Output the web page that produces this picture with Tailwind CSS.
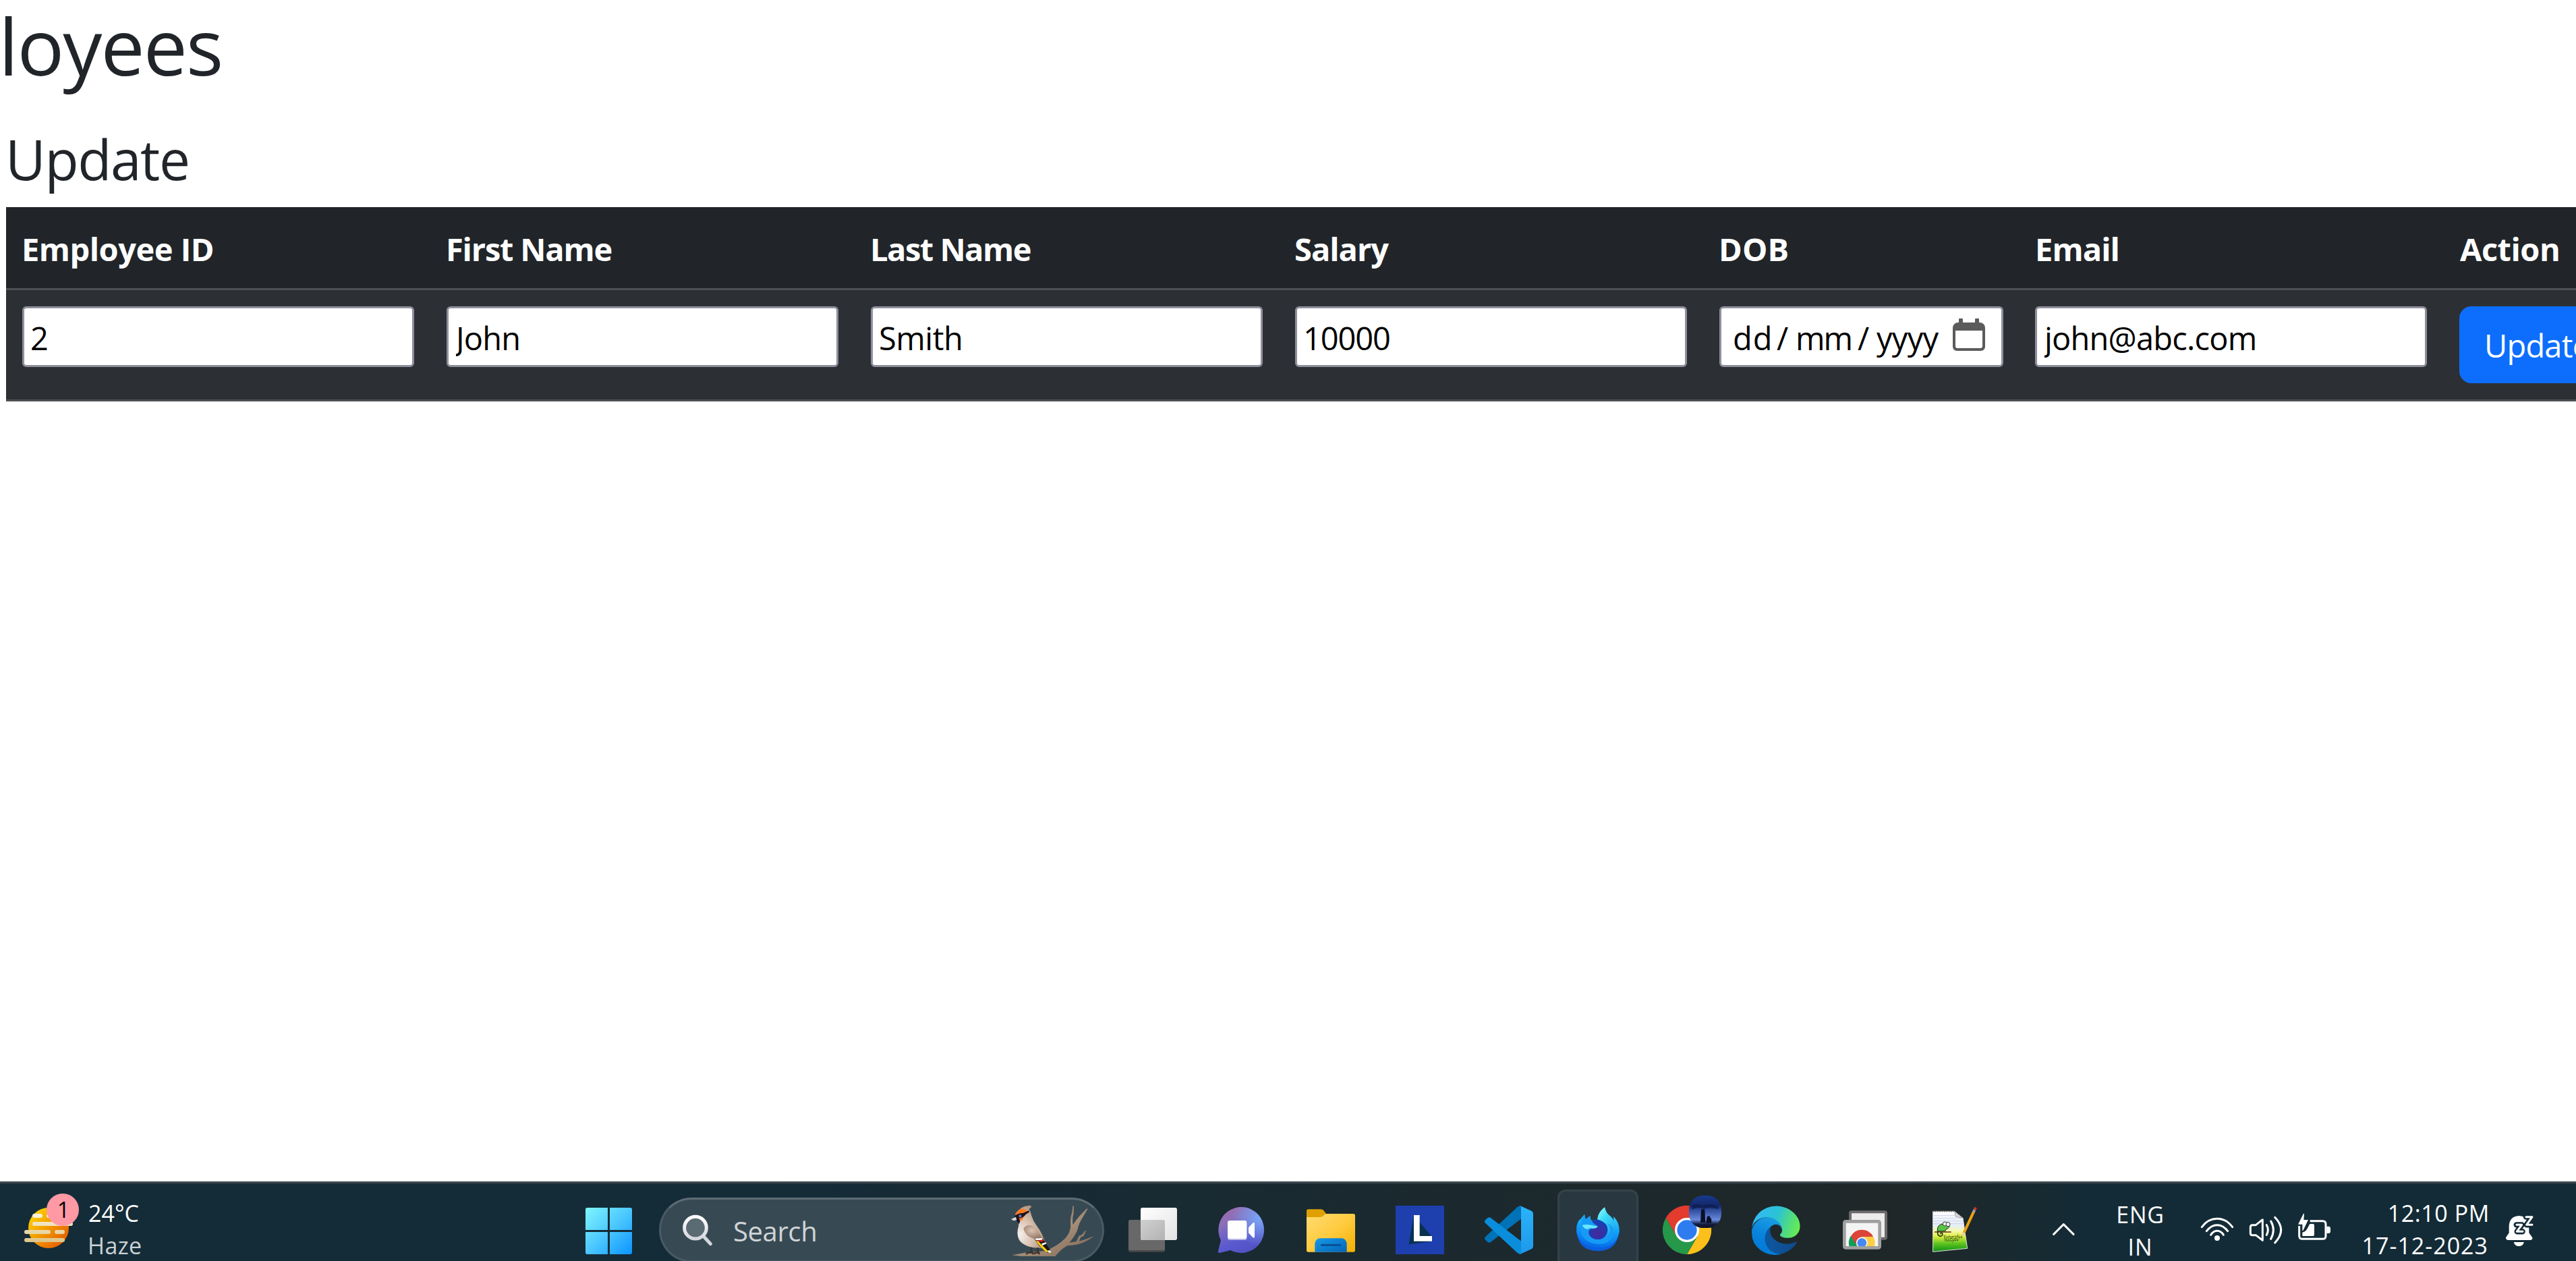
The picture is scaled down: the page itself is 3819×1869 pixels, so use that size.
<!DOCTYPE html>
<html lang="en">
<head>
<meta charset="utf-8">
<title>Employees</title>
<script src="https://cdn.jsdelivr.net/npm/@tailwindcss/browser@4"></script>
</head>
<body class="w-[3819px] h-[1869px] overflow-hidden bg-white font-['Open_Sans','Noto_Sans',sans-serif] text-[#212529] flex flex-col">

<main class="h-[1751px] shrink-0 overflow-hidden">
  <h1 class="-ml-0.5 h-[134px] text-[116px] leading-[134px] tracking-[-1.9px]">loyees</h1>
  <h3 class="mt-[51px] ml-2 h-[100px] text-[82px] leading-[100px] tracking-[-1.4px]">Update</h3>

  <div class="mt-[22px] ml-[9px] w-[3960px] text-[47px]">
    <div class="flex h-[123px] items-center border-b-3 border-[#4d5154] bg-[#212529] pt-1 font-bold text-white">
      <div class="w-[629px] shrink-0 pl-[23px] tracking-[-0.5px]">Employee ID</div>
      <div class="w-[629px] shrink-0 pl-[23px] tracking-[-1.2px]">First Name</div>
      <div class="w-[629px] shrink-0 pl-[23px] tracking-[-1.5px]">Last Name</div>
      <div class="w-[629px] shrink-0 pl-[23px] tracking-[-1px]">Salary</div>
      <div class="w-[469px] shrink-0 pl-[23px] tracking-[0.2px]">DOB</div>
      <div class="w-[629px] shrink-0 pl-[23px] tracking-[-0.9px]">Email</div>
      <div class="shrink-0 pl-[24px] tracking-[-0.5px]">Action</div>
    </div>
    <div class="flex h-[165px] gap-12 border-b-3 border-[#4d5154] bg-[#2c3034] pt-6 pl-6 text-black">
      <input class="h-[90px] w-[581px] shrink-0 rounded-[6px] border-3 border-[#8f8f9d] bg-white pt-1 pl-[9px]" value="2">
      <input class="h-[90px] w-[581px] shrink-0 rounded-[6px] border-3 border-[#8f8f9d] bg-white pt-1 pl-[11px] tracking-[-0.8px]" value="John">
      <input class="h-[90px] w-[581px] shrink-0 rounded-[6px] border-3 border-[#8f8f9d] bg-white pt-1 pl-[9px] tracking-[-0.5px]" value="Smith">
      <input class="h-[90px] w-[581px] shrink-0 rounded-[6px] border-3 border-[#8f8f9d] bg-white pt-1 pl-[9px] tracking-[-1.1px]" value="10000">
      <div class="flex h-[90px] w-[421px] shrink-0 items-center rounded-[6px] border-3 border-[#8f8f9d] bg-white pl-[17px] -mr-px">
        <span class="w-[65px] pt-1 tracking-[1px]">dd</span>
        <span class="w-[28px] pt-1">/</span>
        <span class="w-[92px] pt-1 tracking-[-2px]">mm</span>
        <span class="w-[28px] pt-1">/</span>
        <span class="w-[113px] pt-1 tracking-[-0.7px]">yyyy</span>
        <svg class="mb-1.5 h-12 w-12" viewBox="0 0 48 48"><path fill="#5b5b5b" fill-rule="evenodd" d="M9 2a2 2 0 0 1 6 0V6H33V2a2 2 0 0 1 6 0V6H40a8 8 0 0 1 8 8V42a6 6 0 0 1-6 6H6a6 6 0 0 1-6-6V14A8 8 0 0 1 8 6H9ZM4 18V41a3 3 0 0 0 3 3H41a3 3 0 0 0 3-3V18Z"/></svg>
      </div>
      <input class="h-[90px] w-[581px] shrink-0 rounded-[6px] border-3 border-[#8f8f9d] bg-white pt-1 pl-[11px] tracking-[-0.8px]" value="john@abc.com">
      <button class="h-[114px] w-[240px] shrink-0 rounded-[18px] bg-[#0d6efd] pt-0.5 pl-[37px] text-left tracking-[-0.8px] text-white">Update</button>
    </div>
  </div>
</main>

<footer class="flex h-[118px] shrink-0 overflow-hidden border-t-3 border-[#3e4a50] bg-linear-to-r from-[#142c38] from-30% via-[#1f2728] via-74% to-[#132b36] to-81% text-[34px] leading-[48px] text-white">
  <!-- Weather -->
  <svg class="ml-[30px] h-[115px] w-[90px] shrink-0" viewBox="90 72 270 345">
    <defs><linearGradient id="sun" x1="0" y1="0" x2="1" y2="1"><stop offset=".1" stop-color="#ffd400"/><stop offset="1" stop-color="#e04a00"/></linearGradient>
    <linearGradient id="fog" x1="0" y1="207" x2="0" y2="333" gradientUnits="userSpaceOnUse"><stop offset="0" stop-color="#fbf6e0"/><stop offset="1" stop-color="#dcc488"/></linearGradient></defs>
    <circle cx="216" cy="270" r="90" fill="url(#sun)"/>
    <g fill="url(#fog)"><path d="M153 207H180a9 9 0 0 1 0 18H153a9 9 0 0 1 0-18ZM216 207H260V225H216a9 9 0 0 1 0-18ZM153 243H315a9 9 0 0 1 0 18H153a9 9 0 0 1 0-18ZM117 279H216a9 9 0 0 1 0 18H117a9 9 0 0 1 0-18ZM252 279H279a9 9 0 0 1 0 18H252a9 9 0 0 1 0-18ZM117 315H279a9 9 0 0 1 0 18H117a9 9 0 0 1 0-18Z"/></g>
    <circle cx="279" cy="189" r="72" fill="#ff99a4"/>
    <text x="254" y="225" font-size="97" fill="#000" font-family="Open Sans">1</text>
  </svg>
  <div class="ml-[11px] mt-5 w-[200px] shrink-0">
    <div>24°C</div>
    <div class="text-[#cbd1d4] -ml-px tracking-[0.4px]">Haze</div>
  </div>

  <!-- Start -->
  <svg class="ml-[537px] h-[115px] w-[69px] shrink-0" viewBox="144 72 207 345">
    <defs><linearGradient id="win" gradientUnits="userSpaceOnUse" x1="144" y1="180" x2="351" y2="387"><stop offset="0" stop-color="#7ef6fd"/><stop offset=".5" stop-color="#4cc8ff"/><stop offset="1" stop-color="#0a94ff"/></linearGradient></defs>
    <path fill="url(#win)" d="M152 180H243V279H144V188a8 8 0 0 1 8-8ZM252 180H343a8 8 0 0 1 8 8V279H252ZM144 288H243V387H152a8 8 0 0 1-8-8ZM252 288H351V379a8 8 0 0 1-8 8H252Z"/>
  </svg>

  <!-- Search -->
  <div class="ml-10 mt-[21px] flex h-[96px] w-[660px] shrink-0 rounded-full border-3 border-[#495a63] border-t-[#5e6d74] bg-[#374a54]">
    <svg class="ml-[30px] h-[90px] w-[50px] shrink-0" viewBox="570 144 150 270">
      <defs><linearGradient id="mag" x1="0" y1="0" x2="0" y2="1"><stop offset="0" stop-color="#fff"/><stop offset="1" stop-color="#d5d7de"/></linearGradient></defs>
      <path d="M668 306L700 341" stroke="#d5d7de" stroke-width="15" stroke-linecap="round"/>
      <circle cx="633" cy="269" r="49" fill="#5b6b73" stroke="url(#mag)" stroke-width="15"/>
    </svg>
    <div class="ml-[27px] w-[412px] shrink-0 pt-[2px] text-[40px] leading-[90px] tracking-[-0.4px] text-[#d0d4d7]">Search</div>
    <svg class="h-[90px] w-[127px] shrink-0" viewBox="537 144 381 270">
      <defs>
        <linearGradient id="branch" x1="0" y1="0" x2="1" y2="1"><stop offset="0" stop-color="#7d6450"/><stop offset=".55" stop-color="#a58e78"/><stop offset="1" stop-color="#7c6250"/></linearGradient>
        <radialGradient id="body" cx=".15" cy=".68" r=".8"><stop offset="0" stop-color="#f3efec"/><stop offset=".45" stop-color="#dcc4b4"/><stop offset="1" stop-color="#a98a76"/></radialGradient>
        <radialGradient id="wing" cx=".4" cy=".35" r=".7"><stop offset="0" stop-color="#dcc3b0"/><stop offset="1" stop-color="#86695a"/></radialGradient>
      </defs>
      <path fill="url(#branch)" d="M541 391L600 380L690 372Q745 350 778 316Q800 292 802 262Q798 225 808 200L811 172L816 173L815 205Q808 230 812 256Q824 236 844 214L874 183L877 186L856 222Q838 248 832 280Q818 312 796 335L826 331Q834 318 838 306L852 300L868 281L870 283L860 305L846 313L840 329Q872 320 907 306Q880 326 855 336Q825 348 790 348Q765 358 733 396L580 395Z"/>
      <path fill="url(#body)" d="M556 208Q580 170 622 170L628 176L616 187Q624 196 627 214Q635 240 652 262Q676 292 690 340L700 360L640 358Q596 352 576 328Q558 300 570 262L572 240Q560 230 556 208Z"/>
      <path fill="#ff7a1f" d="M556 208Q566 188 588 184L608 192L596 214L586 236L570 238Z"/>
      <path fill="#1c1420" d="M553 216Q574 202 590 204L615 193L619 199L602 210Q590 228 572 226L577 240L573 252L560 236Z"/>
      <circle cx="577" cy="217" r="7" fill="#7e7bb0" stroke="#262040" stroke-width="3"/>
      <path fill="#d5d8dc" d="M537 231L558 221L562 235L548 238Z"/>
      <path fill="url(#wing)" d="M592 272Q606 252 630 260Q652 276 672 312L684 324L640 318Q600 308 592 272Z"/>
      <path fill="#1a1614" d="M640 317L678 318L715 374L700 380L662 350Z"/>
      <path fill="#fff" d="M642 317L674 315L678 323L648 325ZM672 340L692 334L694 340L676 348ZM700 370L712 370L715 379L704 380Z"/>
      <path fill="#e01b24" d="M654 326L680 322L680 330L660 332Z"/>
      <path fill="#f7ce0e" d="M648 328L656 328L704 376L696 378Q668 360 648 328Z"/>
      <path stroke="#3c2f2b" stroke-width="7" fill="none" d="M627 356V380M656 358V380M603 386L612 380H634V388M640 386L646 380H661V388"/>
    </svg>
  </div>

  <!-- Task view -->
  <svg class="ml-9 h-[115px] w-[72px] shrink-0" viewBox="1059 72 216 345">
    <defs><linearGradient id="tv" x1="0" y1="0" x2="1" y2="1"><stop offset="0" stop-color="#fff"/><stop offset="1" stop-color="#e2e2e2"/></linearGradient>
    <linearGradient id="tv2" x1="0" y1="0" x2="1" y2="1"><stop offset="0" stop-color="#d0d0d0"/><stop offset="1" stop-color="#b3b3b3"/></linearGradient></defs>
    <rect x="1059" y="234" width="162" height="144" rx="8" fill="#444"/>
    <rect x="1059" y="234" width="162" height="136" rx="8" fill="#686868"/>
    <rect x="1113" y="180" width="162" height="144" rx="8" fill="url(#tv)"/>
    <path d="M1113 234H1213a8 8 0 0 1 8 8V324H1121a8 8 0 0 1-8-8Z" fill="url(#tv2)"/>
  </svg>

  <!-- Chat -->
  <svg class="ml-[61px] h-[115px] w-[68px] shrink-0" viewBox="78 72 204 345">
    <defs><linearGradient id="chat" x1=".1" y1="0" x2=".6" y2="1"><stop offset="0" stop-color="#a569a6"/><stop offset=".3" stop-color="#8a6fba"/><stop offset=".7" stop-color="#5b5bd0"/><stop offset="1" stop-color="#5450c4"/></linearGradient>
    <radialGradient id="chat2" cx=".9" cy=".25" r=".6"><stop offset="0" stop-color="#7aa6f5"/><stop offset="1" stop-color="#7aa6f5" stop-opacity="0"/></radialGradient></defs>
    <path id="bub" fill="url(#chat)" d="M180 177a102 102 0 1 1-48 192L86 381Q76 382 78 372L90 325A102 102 0 0 1 180 177Z"/>
    <path fill="url(#chat2)" d="M180 177a102 102 0 1 1-48 192L86 381Q76 382 78 372L90 325A102 102 0 0 1 180 177Z"/>
    <rect x="120" y="243" width="85" height="81" rx="9" fill="#b9b6ea"/>
    <rect x="120" y="237" width="85" height="81" rx="9" fill="#fff"/>
    <path fill="#fff" d="M213 268L232 248Q240 242 240 252V308Q240 318 232 312L213 292Z"/>
  </svg>

  <!-- Files -->
  <svg class="ml-[63px] h-[115px] w-[72px] shrink-0" viewBox="471 72 216 345">
    <defs><linearGradient id="fol" x1="0" y1="0" x2="1" y2="1"><stop offset="0" stop-color="#ffdc73"/><stop offset=".5" stop-color="#ffcb40"/><stop offset="1" stop-color="#f5b000"/></linearGradient>
    <linearGradient id="pock" x1="0" y1="0" x2="1" y2="1"><stop offset="0" stop-color="#179ae6"/><stop offset="1" stop-color="#0363b8"/></linearGradient></defs>
    <path fill="#e0a000" d="M471 195a8 8 0 0 1 8-8H535Q542 187 547 192L562 212V240H471Z"/>
    <path fill="url(#fol)" d="M471 222H530Q540 222 546 216L552 210Q556 207 562 207H679a8 8 0 0 1 8 8V369a8 8 0 0 1-8 8H479a8 8 0 0 1-8-8Z"/>
    <path fill="url(#pock)" d="M508 377V340a24 24 0 0 1 24-24H626a24 24 0 0 1 24 24V377Z"/>
    <path d="M538 346H620" stroke="#0b4c92" stroke-width="8" stroke-linecap="round"/>
  </svg>

  <!-- L -->
  <svg class="ml-[60px] h-[115px] w-[72px] shrink-0" viewBox="867 72 216 345">
    <path fill="#1e3fae" d="M867 171H1083V387H867Z"/>
    <path fill="#07314f" d="M948 213L926 343L1029 329V310Z"/>
    <path fill="#fff" d="M948 213H974V306H1029V329H948Z"/>
  </svg>

  <!-- Code -->
  <svg class="ml-[60px] h-[115px] w-[72px] shrink-0" viewBox="1263 72 216 345">
    <defs><linearGradient id="vs" x1="0" y1="0" x2="0" y2="1"><stop offset="0" stop-color="#2ab4f8"/><stop offset="1" stop-color="#1f98ec"/></linearGradient></defs>
    <path fill="#0072b8" d="M1420 171L1426 173V229L1289 334Q1283 337 1277 333L1266 323Q1260 317 1266 310L1408 178Z"/>
    <path fill="#0a8ddb" d="M1420 387L1426 385V329L1289 224Q1283 221 1277 225L1266 235Q1260 241 1266 248L1408 380Z"/>
    <path fill="url(#vs)" d="M1420 171L1471 194Q1479 198 1479 206V352Q1479 360 1471 364L1420 387Q1425 385 1425 378V180Q1425 173 1420 171Z"/>
  </svg>

  <!-- Firefox Developer Edition -->
  <div class="ml-9 mt-[9px] h-[120px] w-[120px] shrink-0 rounded-[12px] border-3 border-[#354349] bg-[#283740]">
    <svg class="ml-[25px] h-[103px] w-[64px]" viewBox="231 108 192 309">
      <defs><linearGradient id="fx" x1=".6" y1="0" x2=".4" y2="1"><stop offset="0" stop-color="#4be4fd"/><stop offset=".5" stop-color="#12a4f9"/><stop offset="1" stop-color="#0668e8"/></linearGradient>
      <linearGradient id="flame" x1="0" y1="0" x2=".6" y2="1"><stop offset="0" stop-color="#a5fbff"/><stop offset=".4" stop-color="#3ddcf8"/><stop offset="1" stop-color="#1aa4ee"/></linearGradient>
      <radialGradient id="globe" cx=".5" cy=".7" r=".7"><stop offset="0" stop-color="#46279c"/><stop offset="1" stop-color="#0f44b8"/></radialGradient></defs>
      <path fill="#0a5fdc" d="M231 285Q240 373 327 373Q412 373 422 285Z"/>
      <path fill="url(#fx)" d="M267 209L272 232L292 217L296 236L330 236Q318 210 357 178Q360 204 380 216Q394 226 397 240V219Q425 250 422 288Q408 358 327 358Q250 356 232 288Q228 244 252 228Z"/>
      <circle cx="325" cy="277" r="45" fill="url(#globe)"/>
      <path fill="url(#flame)" d="M357 178Q362 204 382 218Q410 244 402 284Q392 320 346 320Q384 300 366 258Q352 240 324 232Q328 200 357 178Z"/>
      <path fill="#159bf5" d="M267 209L272 232L292 217L295 236Q306 250 326 262Q318 276 296 274Q284 280 286 294Q294 322 330 322Q372 318 382 282Q384 262 366 249Q400 262 398 296Q386 338 334 342Q268 340 252 292Q244 250 267 209Z"/>
      <path fill="#69e6ff" d="M257 257Q280 252 298 258L327 263Q318 274 300 271Q288 270 280 276Q262 272 257 257Z"/>
    </svg>
  </div>

  <!-- Chrome with profile picture -->
  <svg class="ml-9 h-[115px] w-[87px] shrink-0" viewBox="615 72 261 345">
    <defs><linearGradient id="sky" x1="0" y1="0" x2="0" y2="1"><stop offset="0" stop-color="#173a90"/><stop offset=".3" stop-color="#14286a"/><stop offset=".42" stop-color="#2a4796"/><stop offset=".75" stop-color="#6a8adf"/><stop offset=".88" stop-color="#141d3e"/><stop offset="1" stop-color="#0a1026"/></linearGradient></defs>
    <path fill="#e33b2e" d="M629 225A108 108 0 0 1 817 225H723L676 306Z"/>
    <path fill="#fdc01a" d="M817 225A108 108 0 0 1 723 387L770 306L723 225Z"/>
    <path fill="#26984a" d="M723 387A108 108 0 0 1 629 225L676 306H770Z"/>
    <circle cx="723" cy="279" r="49" fill="#2f7cf0" stroke="#fff" stroke-width="10"/>
    <rect x="732" y="126" width="144" height="144" rx="62" fill="url(#sky)"/>
    <path fill="#0a1128" d="M786 190Q794 182 802 190L805 246H783ZM812 220L822 216L832 232V248H808Z"/>
    <path fill="#0c1a48" opacity=".7" d="M742 172Q770 160 790 172Q820 158 866 176L862 186Q820 176 800 186Q770 174 746 188Z"/>
  </svg>

  <!-- Edge -->
  <svg class="ml-[45px] h-[115px] w-[72px] shrink-0" viewBox="0 -117.3 256 408.9">
    <defs><linearGradient id="e1" x1="0" y1="0" x2="1" y2="0"><stop offset="0" stop-color="#0c59a4"/><stop offset="1" stop-color="#114a8b"/></linearGradient>
    <linearGradient id="e2" x1=".6" y1="0" x2=".3" y2="1"><stop offset="0" stop-color="#1b9de2"/><stop offset=".5" stop-color="#0883dc"/><stop offset="1" stop-color="#0078d4"/></linearGradient>
    <linearGradient id="e3" x1="0" y1=".3" x2="1" y2=".55"><stop offset="0" stop-color="#35b8f8"/><stop offset=".5" stop-color="#2ac3d4"/><stop offset=".75" stop-color="#4bd88a"/><stop offset="1" stop-color="#66eb55"/></linearGradient></defs>
    <path fill="url(#e1)" d="M231.1 190.5a93 93 0 0 1-10.5 4.7 101.7 101.7 0 0 1-35.9 6.5c-47.3 0-88.5-32.5-88.5-74.3a31.5 31.5 0 0 1 16.4-27.3c-42.8 1.8-53.8 46.4-53.8 72.5 0 73.9 68.1 81.4 82.8 81.4 7.9 0 19.8-2.3 27-4.6l1.3-.4a128.3 128.3 0 0 0 66.6-52.8 4 4 0 0 0-5.4-5.7z"/>
    <path fill="url(#e2)" d="M105.7 241.4A79.2 79.2 0 0 1 83 220A80.7 80.7 0 0 1 112.5 102.4c3.1-1.5 8.5-4.1 15.5-4 10.1.1 19.6 4.9 25.7 13a37 37 0 0 1 6.4 18.7C160 129.8 184.6 61.6 80 61.6c-43.9 0-80 41.6-80 78.2a130 130 0 0 0 12.1 56 128 128 0 0 0 156.4 55.5 75.3 75.3 0 0 1-62.8-10z"/>
    <path fill="url(#e3)" d="M152.2 148.9c-.8 1-3.3 2.5-3.3 5.6 0 2.6 1.7 5 4.7 7.1 14.2 9.9 40.9 8.6 41 8.6a58.700 58.700 0 0 0 29.900-8.200A60.600 60.600 0 0 0 254.500 109.800c.3-22.200-7.900-37-11.200-43.600C222.200 25.100 176.700 1.400 127.300 1.400A128 128 0 0 0 0 127.600c.5-36.500 36.800-66 80-66 3.500 0 23.500.3 42 10 16.300 8.600 24.900 19 30.900 29.200 6.200 10.700 7.300 24.200 7.300 29.500s-2.700 13.300-8 18.600z"/>
  </svg>

  <!-- Remote desktop -->
  <svg class="ml-[63px] h-[115px] w-[66px] shrink-0" viewBox="216 72 198 345">
    <defs><clipPath id="rdc"><rect x="230" y="246" width="143" height="105"/></clipPath></defs>
    <rect x="249" y="199" width="159" height="118" rx="6" fill="#ececec" stroke="#6c6a6a" stroke-width="12"/>
    <rect x="223" y="241" width="157" height="117" rx="6" fill="#f4f4f4" stroke="#a09f9f" stroke-width="14"/>
    <g clip-path="url(#rdc)">
      <path fill="#db4437" d="M251 308A57 57 0 0 1 352 310H301L276 350Z"/>
      <path fill="#ffcd40" d="M352 310A57 57 0 0 1 330 386L301 310Z"/>
      <path fill="#0f9d58" d="M251 306A57 57 0 0 0 272 386L282 352Z"/>
      <circle cx="301" cy="336" r="23" fill="#4487f5" stroke="#f4f4f4" stroke-width="5"/>
    </g>
  </svg>

  <!-- Notepad++ -->
  <svg class="ml-[67px] h-[115px] w-[67px] shrink-0" viewBox="615 72 201 345">
    <defs><linearGradient id="np" x1="0" y1="0" x2="0" y2="1"><stop offset="0" stop-color="#fff"/><stop offset=".35" stop-color="#e6eefa"/><stop offset=".48" stop-color="#f6f9b0"/><stop offset=".62" stop-color="#e0ee3c"/><stop offset=".8" stop-color="#5cc41f"/><stop offset="1" stop-color="#0d8f16"/></linearGradient></defs>
    <path fill="url(#np)" stroke="#dfe6df" stroke-width="3" d="M617 196H712L750 226L770 361L617 376Z"/>
    <path stroke="#b6c3e0" stroke-width="2" d="M618 215H714M618 227H748M618 239H750M618 251H752"/>
    <path stroke="#444" stroke-width="6" stroke-dasharray="4 4" d="M618 196H712"/>
    <path fill="#d4d4d4" stroke="#888" stroke-width="2" d="M713 197L748 225L718 220Z"/>
    <path d="M624 288H698" stroke="#704020" stroke-width="5"/>
    <path fill="#57c545" stroke="#1c3a18" stroke-width="3" d="M636 284Q636 252 664 252L688 258Q694 266 684 272Q672 274 672 284Z"/>
    <path fill="none" stroke="#1c3a18" stroke-width="5" d="M640 284Q632 302 650 307Q664 304 658 293Q650 290 650 298"/>
    <circle cx="670" cy="252" r="9" fill="#fff" stroke="#333" stroke-width="3"/><circle cx="684" cy="254" r="9" fill="#fff" stroke="#333" stroke-width="3"/>
    <text x="666" y="331" font-size="42" textLength="84" lengthAdjust="spacingAndGlyphs" transform="rotate(-4 666 331)" fill="#23401a" font-family="Open Sans">Notepad++</text>
    <path stroke="#f0a010" stroke-width="12" d="M755 291L799 196"/>
    <path fill="#e8c79c" d="M749 289L761 294L749 308Z"/>
    <path stroke="#9a9fa8" stroke-width="12" d="M797 201L803 188"/>
    <path stroke="#c03a30" stroke-width="12" d="M802 190L807 179"/>
  </svg>

  <!-- Tray -->
  <svg class="ml-[111px] h-[115px] w-[33px] shrink-0" viewBox="68 72 99 345"><path fill="none" stroke="#fff" stroke-width="9" stroke-linecap="round" stroke-linejoin="round" d="M73 298L117 254L161 298"/></svg>
  <div class="ml-16 mt-[22px] w-[66px] shrink-0 text-center whitespace-nowrap">
    <div class="-mx-2 tracking-[0.7px]">ENG</div>
    <div class="tracking-[1px]">IN</div>
  </div>
  <svg class="ml-14 h-[115px] w-[50px] shrink-0" viewBox="726 72 150 345">
    <g fill="none" stroke="#fff" stroke-width="9" stroke-linecap="round"><path d="M733 266Q760 229 801 229Q842 229 869 266M754 284Q774 257 801 257Q828 257 848 284M773 301Q784 283 801 283Q818 283 829 301"/></g>
    <circle cx="801" cy="315" r="12" fill="#fff"/>
  </svg>
  <svg class="ml-[22px] h-[115px] w-[50px] shrink-0" viewBox="942 72 150 345">
    <g fill="none" stroke="#fff" stroke-width="9" stroke-linecap="round" stroke-linejoin="round"><path d="M1003 233L973 257H958Q949 257 949 266V293Q949 302 958 302H973L1003 325ZM1021 257Q1033 279 1021 301M1040 240Q1062 279 1040 319M1058 223Q1112 279 1058 336"/></g>
  </svg>
  <svg class="ml-[22px] h-[115px] w-[50px] shrink-0" viewBox="1158 72 150 345">
    <path fill="none" stroke="#fff" stroke-width="9" d="M1214 239H1270Q1284 239 1284 253V305Q1284 319 1270 319H1181Q1166 319 1166 305V261"/>
    <path fill="#fff" d="M1288 263H1297Q1305 264 1305 272V285Q1305 293 1297 294H1288ZM1213 252H1227Q1233 252 1233 258V300Q1233 306 1227 306H1180V290Q1192 288 1200 276Z"/>
    <path fill="#fff" stroke="#142b37" stroke-width="0" d="M1185 206H1188L1186 234H1206L1183 282H1180V254H1161Z"/>
  </svg>
  <div class="mt-5 w-[232px] shrink-0 text-right">
    <div class="-mr-[3px] tracking-[0.6px]">12:10 PM</div>
    <div class="-mr-[1px] tracking-[1px]">17-12-2023</div>
  </div>
  <svg class="ml-[26px] h-[115px] w-[44px] shrink-0" viewBox="1003 72 132 345">
    <path fill="#fff" d="M1064 216Q1108 218 1109 262V292L1124 313Q1126 323 1116 324H1016Q1005 323 1006 313L1020 292V262Q1022 218 1064 216ZM1041 333H1087Q1082 351 1064 351Q1046 351 1041 333Z"/>
    <g fill="none" stroke-linejoin="round" stroke-linecap="round"><path stroke="#142b37" stroke-width="25" d="M1053 256H1077L1056 286H1080M1096 221H1123L1098 256H1123"/><path stroke="#fff" stroke-width="9" d="M1054 256H1077L1055 286H1081M1096 221H1123L1098 256H1123"/></g>
  </svg>
</footer>
</body>
</html>
